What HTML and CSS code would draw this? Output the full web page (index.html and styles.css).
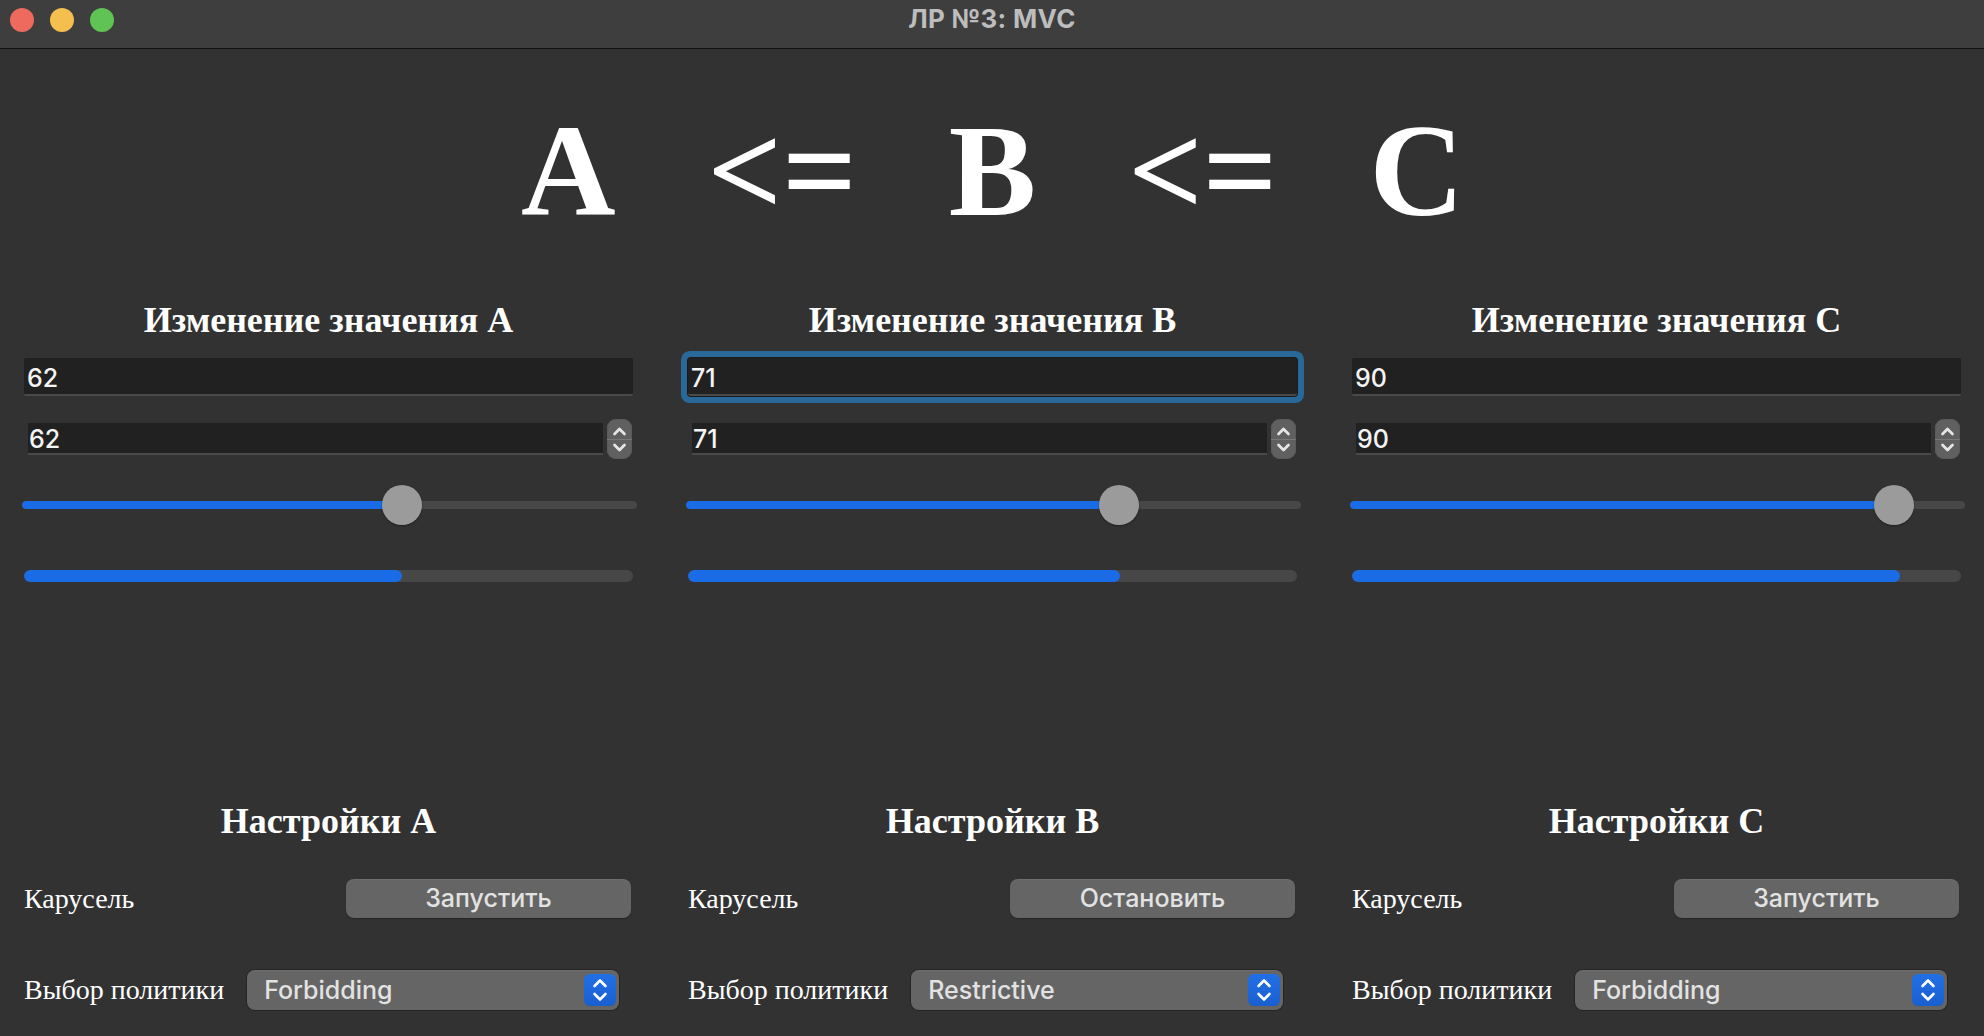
FILE: index.html
```html
<!DOCTYPE html>
<html lang="ru">
<head>
<meta charset="utf-8">
<title>ЛР №3: MVC</title>
<link rel="stylesheet" href="styles.css">
</head>
<body>
<div class="window">
  <header class="titlebar">
    <div class="lights">
      <span class="light red"></span>
      <span class="light yellow"></span>
      <span class="light green"></span>
    </div>
    <div class="title">ЛР №3: MVC</div>
    <div></div>
  </header>

  <main class="content">
    <div class="formula">
      <span>A</span><span>&lt;=</span><span>B</span><span>&lt;=</span><span>C</span>
    </div>

    <section class="editors">
      <div class="editor">
        <h2 class="heading">Изменение значения A</h2>
        <div class="field">62</div>
        <div class="spin">
          <div class="spin-field">62</div>
          <div class="stepper">
            <svg width="25" height="40" viewBox="0 0 25 40"><polyline points="7.5,15 12.5,10 17.5,15" /><line class="div" x1="0" y1="20.5" x2="25" y2="20.5"/><polyline points="7.5,26 12.5,31 17.5,26" /></svg>
          </div>
        </div>
        <div class="slider" style="--v:0.62">
          <div class="track"><div class="track-fill"></div></div>
          <div class="handle"></div>
        </div>
        <div class="progress"><div class="progress-fill" style="width:62%"></div></div>
      </div>

      <div class="editor">
        <h2 class="heading">Изменение значения B</h2>
        <div class="field focused">71</div>
        <div class="spin">
          <div class="spin-field">71</div>
          <div class="stepper">
            <svg width="25" height="40" viewBox="0 0 25 40"><polyline points="7.5,15 12.5,10 17.5,15" /><line class="div" x1="0" y1="20.5" x2="25" y2="20.5"/><polyline points="7.5,26 12.5,31 17.5,26" /></svg>
          </div>
        </div>
        <div class="slider" style="--v:0.71">
          <div class="track"><div class="track-fill"></div></div>
          <div class="handle"></div>
        </div>
        <div class="progress"><div class="progress-fill" style="width:71%"></div></div>
      </div>

      <div class="editor">
        <h2 class="heading">Изменение значения C</h2>
        <div class="field">90</div>
        <div class="spin">
          <div class="spin-field">90</div>
          <div class="stepper">
            <svg width="25" height="40" viewBox="0 0 25 40"><polyline points="7.5,15 12.5,10 17.5,15" /><line class="div" x1="0" y1="20.5" x2="25" y2="20.5"/><polyline points="7.5,26 12.5,31 17.5,26" /></svg>
          </div>
        </div>
        <div class="slider" style="--v:0.90">
          <div class="track"><div class="track-fill"></div></div>
          <div class="handle"></div>
        </div>
        <div class="progress"><div class="progress-fill" style="width:90%"></div></div>
      </div>
    </section>

    <section class="settings">
      <div class="setting">
        <h2 class="heading">Настройки A</h2>
        <div class="row carousel">
          <span class="label">Карусель</span>
          <div class="button">Запустить</div>
        </div>
        <div class="row policy">
          <span class="label">Выбор политики</span>
          <div class="combo">
            <span class="combo-text">Forbidding</span>
            <span class="combo-arrow"><svg width="32" height="32" viewBox="0 0 32 32"><polyline points="10.5,12 16,6.5 21.5,12"/><polyline points="10.5,20 16,25.5 21.5,20"/></svg></span>
          </div>
        </div>
      </div>

      <div class="setting">
        <h2 class="heading">Настройки B</h2>
        <div class="row carousel">
          <span class="label">Карусель</span>
          <div class="button">Остановить</div>
        </div>
        <div class="row policy">
          <span class="label">Выбор политики</span>
          <div class="combo">
            <span class="combo-text">Restrictive</span>
            <span class="combo-arrow"><svg width="32" height="32" viewBox="0 0 32 32"><polyline points="10.5,12 16,6.5 21.5,12"/><polyline points="10.5,20 16,25.5 21.5,20"/></svg></span>
          </div>
        </div>
      </div>

      <div class="setting">
        <h2 class="heading">Настройки C</h2>
        <div class="row carousel">
          <span class="label">Карусель</span>
          <div class="button">Запустить</div>
        </div>
        <div class="row policy">
          <span class="label">Выбор политики</span>
          <div class="combo">
            <span class="combo-text">Forbidding</span>
            <span class="combo-arrow"><svg width="32" height="32" viewBox="0 0 32 32"><polyline points="10.5,12 16,6.5 21.5,12"/><polyline points="10.5,20 16,25.5 21.5,20"/></svg></span>
          </div>
        </div>
      </div>
    </section>
  </main>
</div>
</body>
</html>
```

FILE: styles.css
```css
* { box-sizing: border-box; }

html, body {
  margin: 0;
  padding: 0;
  background: #323232;
  width: 1984px;
  height: 1036px;
  overflow: hidden;
}

.window {
  width: 1984px;
  height: 1036px;
  background: #323232;
  font-family: "Liberation Serif", "Times New Roman", serif;
  color: #ffffff;
}

/* Title bar */
.titlebar {
  height: 49px;
  background: #3d3e3d;
  border-bottom: 1px solid #121212;
  display: grid;
  grid-template-columns: 1fr auto 1fr;
  align-items: start;
}

.lights {
  display: flex;
  gap: 16px;
  padding: 8px 0 0 10px;
}

.light {
  width: 24px;
  height: 24px;
  border-radius: 50%;
  display: block;
}
.light.red { background: #ee6a5e; }
.light.yellow { background: #f5bf4f; }
.light.green { background: #5fc454; }

.title {
  font-family: Inter, "Liberation Sans", sans-serif;
  font-weight: 700;
  font-size: 26px;
  color: #bdbdbd;
  line-height: 30px;
  padding-top: 4px;
  letter-spacing: 0.3px;
}

/* Content */
.content {
  padding: 0 23px 0 24px;
}

.formula {
  margin-top: 56px;
  height: 131px;
  display: flex;
  justify-content: center;
  gap: 92px;
  font-weight: 700;
  font-size: 131px;
  line-height: 131px;
  color: #ffffff;
}

.editors,
.settings {
  display: grid;
  grid-template-columns: repeat(3, 1fr);
  column-gap: 55px;
}

.editors { margin-top: 64px; }

.heading {
  margin: 0;
  height: 40px;
  font-size: 36px;
  line-height: 40px;
  font-weight: 700;
  text-align: center;
  color: #ffffff;
}

.editor {
  display: flex;
  flex-direction: column;
}

.field {
  margin-top: 18px;
  height: 38px;
  background: #212121;
  border-bottom: 2px solid #4a4a4a;
  border-radius: 2px;
  padding: 2px 0 0 3px;
  font-family: Inter, "Liberation Sans", sans-serif;
  font-weight: 500;
  font-size: 25px;
  line-height: 36px;
  color: #f4f4f4;
}

.field.focused {
  box-shadow: 0 0 0 1px #1a1a1a, 0 0 0 7px #28699a;
  border-radius: 3px;
}

.spin {
  margin-top: 23px;
  height: 40px;
  display: flex;
  align-items: center;
  gap: 4px;
  padding: 0 1px 0 4px;
}

.spin-field {
  flex: 1;
  height: 32px;
  background: #212121;
  border-bottom: 2px solid #4a4a4a;
  padding: 1px 0 0 1px;
  font-family: Inter, "Liberation Sans", sans-serif;
  font-weight: 500;
  font-size: 25px;
  line-height: 31px;
  color: #f4f4f4;
}

.stepper {
  width: 25px;
  height: 40px;
  border-radius: 9px;
  background: #606060;
  box-shadow: inset 0 0 0 1px #5a5a5a;
}
.stepper svg { display: block; }
.stepper polyline {
  fill: none;
  stroke: #e6e6e6;
  stroke-width: 2.7;
  stroke-linecap: round;
  stroke-linejoin: round;
}
.stepper .div {
  stroke: #787878;
  stroke-width: 1;
}

.slider {
  margin: 26px -4px 0 -2px;
  height: 40px;
  position: relative;
}

.track {
  margin-top: 16px;
  height: 8px;
  border-radius: 4px;
  background: #474747;
  overflow: hidden;
}

.track-fill {
  height: 8px;
  width: calc(16px + (100% - 28px) * var(--v));
  background: #1a6be6;
  border-radius: 4px;
}

.handle {
  position: absolute;
  top: 0;
  left: calc(16px + (100% - 28px) * var(--v) - 20px);
  width: 40px;
  height: 40px;
  border-radius: 50%;
  background: #9a9b9a;
  box-shadow: 0 1px 2px rgba(0, 0, 0, 0.35);
}

.progress {
  margin-top: 45px;
  height: 12px;
  border-radius: 6px;
  background: #474747;
  overflow: hidden;
}

.progress-fill {
  height: 12px;
  background: #1a6be6;
  border-radius: 6px;
}

/* Settings */
.settings { margin-top: 219px; }

.setting {
  display: flex;
  flex-direction: column;
}

.row {
  display: flex;
  align-items: center;
}

.carousel {
  margin-top: 38px;
  height: 39px;
}

.policy {
  margin-top: 52px;
  height: 40px;
}

.label {
  font-size: 28px;
  color: #ffffff;
  white-space: nowrap;
}

.button {
  margin-left: auto;
  margin-right: 2px;
  width: 285px;
  height: 39px;
  border-radius: 8px;
  background: #656565;
  box-shadow: 0 1px 1px rgba(0, 0, 0, 0.3), inset 0 1px 0 rgba(255, 255, 255, 0.06);
  font-family: Inter, "Liberation Sans", sans-serif;
  font-weight: 500;
  font-size: 25px;
  line-height: 39px;
  text-align: center;
  color: #e2e2e2;
}

.combo {
  flex: 1;
  margin-left: 23px;
  margin-right: 14px;
  height: 40px;
  border-radius: 8px;
  background: #656565;
  box-shadow: 0 0 0 1px rgba(0, 0, 0, 0.25), inset 0 1px 0 rgba(255, 255, 255, 0.06);
  display: flex;
  align-items: center;
  padding: 0 3px 0 17px;
}

.combo-text {
  flex: 1;
  font-family: Inter, "Liberation Sans", sans-serif;
  font-weight: 500;
  font-size: 25px;
  color: #e2e2e2;
}

.combo-arrow {
  width: 32px;
  height: 32px;
  border-radius: 6px;
  background: linear-gradient(#2270e6, #1a5fd0);
}
.combo-arrow svg { display: block; }
.combo-arrow polyline {
  fill: none;
  stroke: #ffffff;
  stroke-width: 2.6;
  stroke-linecap: round;
  stroke-linejoin: round;
}
```
